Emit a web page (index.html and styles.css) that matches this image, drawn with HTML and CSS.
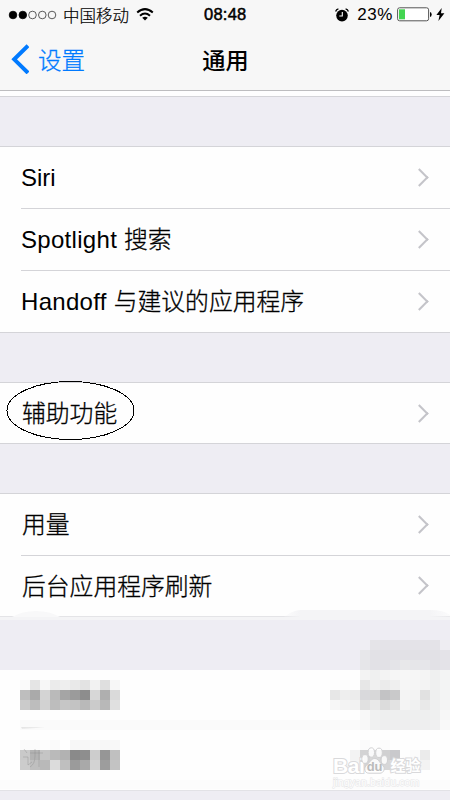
FILE: index.html
```html
<!DOCTYPE html>
<html lang="zh-CN">
<head>
<meta charset="utf-8">
<title>通用</title>
<link rel="stylesheet" href="styles.css">
</head>
<body>
<div class="screen">
  <header class="header">
    <div class="status">
      <div class="carrier">
        <svg class="signal" width="49" height="10" viewBox="0 0 49 10"><g stroke="#000" stroke-width=".8"><circle cx="5" cy="5" r="3.8"/><circle cx="14.8" cy="5" r="3.8"/><g fill="none" stroke="#333"><circle cx="24.5" cy="5" r="3.8"/><circle cx="34.3" cy="5" r="3.8"/><circle cx="44" cy="5" r="3.8"/></g></g></svg>
        <span class="operator">中国移动</span>
        <svg class="wifi" width="18" height="13" viewBox="0 0 18 13"><g fill="none" stroke="#000" stroke-width="2"><path d="M1.2 4.6Q9-2.3 16.8 4.6"/><path d="M4 7.7Q9 3.3 14 7.7"/></g><path d="M6.2 9.7Q9 7.6 11.8 9.7L9 12.5Z"/></svg>
      </div>
      <time class="clock">08:48</time>
      <div class="power">
        <svg class="alarm" width="14" height="14" viewBox="0 0 14 14"><circle cx="7" cy="7.6" r="5.8"/><path d="M.6 3.5Q1.2 1.4 3.4.9M10.6.9Q12.8 1.4 13.4 3.5" fill="none" stroke="#000" stroke-width="1.3"/><path d="M7.3 4v4H4.3" fill="none" stroke="#fff" stroke-width="1.1"/></svg>
        <span class="percent">23%</span>
        <svg class="battery" width="35" height="15" viewBox="0 0 35 15"><rect x=".6" y=".8" width="31" height="13" rx="2" fill="#fff" stroke="#555"/><rect x="2" y="2.3" width="6" height="10" fill="#43d551"/><path d="M33 5q1.7.3 1.7 2.5T33 10z"/></svg>
        <svg class="bolt" width="9" height="13" viewBox="0 0 9 13"><path d="M5.7 0 .4 7.1h3.2L2.4 13 8.4 5.2H5z"/></svg>
      </div>
    </div>
    <nav class="nav">
      <a class="back"><svg width="19" height="30" viewBox="0 0 19 30"><path d="M18 1.7 4.2 15.3 18 28.9" fill="none" stroke="#007aff" stroke-width="4"/></svg><span>设置</span></a>
      <h1>通用</h1>
    </nav>
  </header>
  <main>
    <section class="group stub"></section>
    <section class="group three">
      <div class="row"><span>Siri</span><i class="chevron"></i></div>
      <div class="row"><span class="mixed">Spotlight <b>搜索</b></span><i class="chevron"></i></div>
      <div class="row"><span class="mixed">Handoff <b>与建议的应用程序</b></span><i class="chevron"></i></div>
    </section>
    <section class="group one">
      <div class="row"><b>辅助功能</b><i class="chevron"></i>
        <svg class="ring" width="130" height="60" viewBox="0 0 130 60" shape-rendering="crispEdges"><ellipse cx="64.5" cy="29.5" rx="63.5" ry="29" fill="none" stroke="#000"/></svg>
      </div>
    </section>
    <section class="group two">
      <div class="row"><b>用量</b><i class="chevron"></i></div>
      <div class="row"><b>后台应用程序刷新</b><i class="chevron"></i></div>
      <svg class="smudge" width="450" height="12" viewBox="0 0 450 12"><defs><linearGradient id="fade"><stop offset="0" stop-color="#f4f4f6" stop-opacity="0"/><stop offset=".12" stop-color="#f4f4f6"/><stop offset=".88" stop-color="#f4f4f6"/><stop offset="1" stop-color="#f4f4f6" stop-opacity=".3"/></linearGradient></defs><path d="M0 8.5h450V12H0z" fill="#f4f4f6"/><path d="M12 9Q22 3 36 3t24 6z" fill="#f8f8f9"/><path d="M280 12Q292 2 300 2h130q14 0 20 5v5z" fill="url(#fade)"/></svg>
    </section>
    <section class="group hidden">
      <svg class="mosaic" width="450" height="160" viewBox="0 0 450 160"><g id="cells" shape-rendering="crispEdges"></g>
        <path d="M21 87l24 .4-23 1.4z" fill="#e4e4e4"/>
        <path d="M24 109l3 4M23 117h5v8l4-3M30 113h13M35 109v7q0 8-5 11M39 110v17" fill="none" stroke="#888" stroke-opacity=".35"/>
      </svg>
      <div class="watermark">
        <div class="brand"><span class="latin">Bai</span><svg width="29" height="27" viewBox="0 0 29 27"><g fill="#fff" fill-opacity=".85" stroke="#d0d0d2" stroke-width="1"><ellipse cx="4" cy="12" rx="3.2" ry="4.4"/><ellipse cx="10.3" cy="5.5" rx="3.2" ry="4.7"/><ellipse cx="18" cy="5.8" rx="3.3" ry="4.7"/><ellipse cx="23.3" cy="13" rx="3.2" ry="4.4"/><path d="M13.8 11.5c3.6 0 4.6 4 7.3 6.2 4.2 3.3 1.5 8.5-2.1 8.5H8c-4.7 0-5.7-5.5-2-8.5 3-2.3 4.3-6.2 7.8-6.2z"/></g><text class="du" x="13.6" y="24" text-anchor="middle">du</text></svg><span class="cn">经验</span></div>
        <div class="url">jingyan.baidu.com</div>
      </div>
    </section>
  </main>
</div>
<script src="mosaic.js"></script>
</body>
</html>
```
FILE: styles.css
```css
* { box-sizing: border-box; }
body { margin: 0; background: #eeedf3; color: #000; font-family: "Liberation Sans", "Noto Sans CJK SC", sans-serif; }
.screen { width: 450px; height: 800px; overflow: hidden; }
svg { display: block; flex: none; }
.header { height: 91px; background: #f7f7f7; border-bottom: 1px solid #bdbdbf; }
.status { height: 29px; display: grid; grid-template-columns: 1fr 44px 1fr; align-items: center; padding: 0 6px 0 8px; }
.carrier, .power { display: flex; align-items: center; }
.operator { font: 300 16.5px/24px "Noto Sans CJK SC", sans-serif; margin: 0 7px 0 6px; -webkit-text-stroke: .2px; }
.clock { font-size: 16.5px; font-weight: 400; -webkit-text-stroke: .5px #000; letter-spacing: .25px; }
.power { justify-content: flex-end; margin-right: -1px; }
.percent { font-size: 17px; margin: 0 4px 0 8px; letter-spacing: .6px; }
.bolt { margin-left: 4px; }
.nav { height: 61px; display: grid; grid-template-columns: 1fr auto 1fr; align-items: center; padding: 0 9px 1px 10px; }
.back { display: flex; align-items: center; gap: 9px; color: #007aff; font: 300 23.5px/30px "Noto Sans CJK SC", sans-serif; -webkit-text-stroke: .3px; }
.back span, h1 { padding-bottom: 1px; }
h1 { margin: 0; font: 500 23.2px/30px "Noto Sans CJK SC", sans-serif; }
.group { background: #fefefe; border-top: 1px solid #d4d4d8; border-bottom: 1px solid #d4d4d8; position: relative; }
.stub { height: 6px; border-top: 0; }
.three { margin-top: 49px; height: 187px; }
.one { margin-top: 49px; height: 62px; }
.two { margin-top: 49px; height: 124px; }
.group { display: flex; flex-direction: column; }
.row { flex: 1; margin-left: 21px; padding-right: 21px; display: flex; align-items: center; justify-content: space-between; font-size: 24px; line-height: 36px; position: relative; }
.row > b, .mixed { padding-bottom: 2px; }
.row > b { padding-left: 1px; }
.mixed { letter-spacing: .3px; }
.row + .row { border-top: 1px solid #d4d4d8; }
.row b { font-family: "Noto Sans CJK SC", sans-serif; font-weight: 300; font-size: 23.8px; letter-spacing: 0; -webkit-text-stroke: .3px; }
.chevron { width: 13px; height: 13px; border: solid #c4c4c9; border-width: 2px 2px 0 0; transform: translateX(-3px) rotate(45deg); }
.ring { position: absolute; left: -15px; top: -2px; }
.smudge { position: absolute; left: 0; bottom: -4px; }
.hidden { margin-top: 53px; height: 121px; border-top: 0; border-bottom-color: #e2e2e6; }
.mosaic { position: absolute; left: 0; top: -30px; }
.watermark { position: absolute; left: 333px; top: 76px; width: 94px; color: #fff; }
.brand { height: 30px; display: flex; align-items: flex-end; font-weight: 700; }
.latin, .cn { -webkit-text-stroke: 2px #d9d9db; paint-order: stroke fill; }
.latin { font-size: 21px; line-height: 20px; letter-spacing: -.4px; }
.brand svg { margin: 0 0 2px -3px; }
.du { font: 700 13px "Liberation Sans", sans-serif; fill: #bbb; }
.cn { font-family: "Noto Sans CJK SC", sans-serif; font-size: 15px; line-height: 20px; margin-bottom: 1px; }
.url { font-size: 10.5px; line-height: 12px; font-weight: 400; -webkit-text-stroke: 1px #e5e5e6; paint-order: stroke fill; letter-spacing: .1px; }
```
FILE: mosaic.js
```js
// Obscured areas: [x, y, colours of consecutive 10px cells]
const runs = [
  [20, 40, "fafafa e5e5e5 f7f7f7 ebebeb eeeeee e9e9e9 e3e3e3 f2f2f2 dfdfdf f7f7f7"],
  [20, 50, "bebebe aaaaaa d4d4d4 bababa a5a5a5 9b9b9b 8d8d8d d7d7d7 afafaf dadada"],
  [20, 60, "cbcbcb bdbdbd d2d2d2 bdbdbd c6c6c6 c3c3c3 b9b9b9 cbcbcb b8b8b8 e0e0e0"],
  [20, 100, "fafafa fbfbfb fdfdfd fafafa ffffff f7f7f7 f7f7f7 f9f9f9 f7f7f7 f8f8f8"],
  [20, 110, "c9c9c9 b3b3b3 c5c5c5 bababa b2b2b2 8a8a8a 8e8e8e cdcdcd 969696 c0c0c0"],
  [20, 120, "cccccc bfbfbf b9b9b9 dcdcdc bfbfbf 9b9b9b a9a9a9 d3d3d3 9d9d9d c3c3c3"],
  [360, 0, "efeef3 e5e4e8 e4e3e8 e4e3e8 e4e3e8 e4e3e8 e4e3e8 e4e3e8 eeedf2"],
  [360, 10, "e7e7ea e2e1e6 e2e1e6 e2e1e6 e2e1e6 e2e1e6 e2e1e6 e2e1e6 e4e3e8"],
  [360, 20, "e6e6e9 e2e1e6 e2e1e6 e4e4e8 e8e8ea e6e6e9 e6e6ea e2e1e6 e4e3e8"],
  [360, 30, "f3f3f3 eff0f0 f3f3f3 f6f6f6 f7f7f7 f6f6f6 f4f4f4 eff0f0 f3f4f4"],
  [330, 40, "fdfdfd fcfcfc fefefe e7e7e7 f0f0f0 ebebeb efefef f6f6f6 f5f5f5 f3f3f3 eff0f0 f3f4f4"],
  [330, 50, "e7e7e7 eeeeee ececec d9d9dc d8d8d9 c3c3c5 c9c9ca f4f4f4 f3f3f3 e1e1e1 eff0f0 f3f4f4"],
  [330, 60, "f7f7f7 f3f3f3 f2f2f2 e1e1e1 e9e9e9 dcdcdc e3e3e3 f4f4f4 f0f1f1 e9e9e9 eff0f0 f4f4f4"],
  [360, 70, "f8f8f8 f0f1f1 eeefef eeefef eeefef eeefef eeefef eff0f0 f7f7f7"],
  [360, 80, "f8f8f8 f0f1f1 eeeeef eeeeef eeeeef eeeeef eeeeef f0f0f1 f9f9f9"],
  [360, 100, "fbfbfb fefefe fcfcfc"],
  [350, 110, "f3f3f3 d3d3d4 d8d8d9 d0d0d1 c9c9cc fefefe fbfbfb ebebeb"],
  [350, 120, "f5f5f5 d3d3d4 d5d5d6 d7d7d8 dddddf fefefe fdfdfd f3f3f3"]
];
const layer = document.getElementById("cells");
function cell(x, y, w, h, fill) {
  const r = document.createElementNS("http://www.w3.org/2000/svg", "rect");
  for (const [k, v] of Object.entries({ x, y, width: w, height: h, fill })) r.setAttribute(k, v);
  layer.append(r);
}
cell(20, 80, 340, 10, "#fafafa");
cell(0, 140, 450, 9, "#fcfcfc");
for (const [x, y, colours] of runs)
  colours.split(" ").forEach((c, i) => cell(x + i * 10, y, 10, 10, "#" + c));
```
